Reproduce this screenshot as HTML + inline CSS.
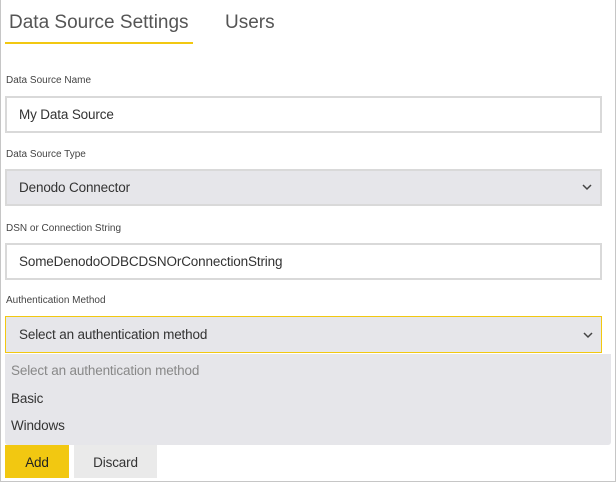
<!DOCTYPE html>
<html><head><meta charset="utf-8"><style>
*{box-sizing:border-box;margin:0;padding:0}
body{width:616px;height:483px;background:#fff;font-family:"Liberation Sans",sans-serif;color:#333;position:relative;overflow:hidden}
.frame{position:absolute;left:0;top:0;width:616px;height:482px;border:1px solid #c6c6c6;border-top:none}
.abs{position:absolute}
.tab{font-size:19px;color:#555;top:12px}
.lbl{font-size:10px;color:#444;left:6px}
.box{left:5px;width:597px;height:37px;border:2px solid #d9d9d9;font-size:13.5px;letter-spacing:-0.15px;color:#333;padding-left:12px;line-height:33px}
.sel{background:#e6e6ea}
.chev{position:absolute;right:8px;top:12px}
.dd{font-size:13.5px;letter-spacing:-0.15px}
</style></head><body>
<div class="frame"></div>
<div class="abs tab" style="left:9px">Data Source Settings</div>
<div class="abs tab" style="left:225px">Users</div>
<div class="abs" style="left:5px;top:42px;width:188px;height:2px;background:#f2c811"></div>

<div class="abs lbl" style="top:75px">Data Source Name</div>
<div class="abs box" style="top:96px">My Data Source</div>

<div class="abs lbl" style="top:149px">Data Source Type</div>
<div class="abs box sel" style="top:169px">Denodo Connector<svg class="chev" width="10" height="8" viewBox="0 0 10 8"><path d="M1 2 L5 6 L9 2" fill="none" stroke="#444" stroke-width="1.5"/></svg></div>

<div class="abs lbl" style="top:223px">DSN or Connection String</div>
<div class="abs box" style="top:243px">SomeDenodoODBCDSNOrConnectionString</div>

<div class="abs lbl" style="top:295px">Authentication Method</div>
<div class="abs box sel" style="top:316px;border:1px solid #f2c811;padding-left:13px;line-height:35px">Select an authentication method<svg class="chev" width="10" height="8" viewBox="0 0 10 8" style="top:14px"><path d="M1 2 L5 6 L9 2" fill="none" stroke="#444" stroke-width="1.5"/></svg></div>

<div class="abs dd" style="left:5px;top:354px;width:606px;height:91px;background:#e6e6ea;border-radius:0 0 3px 3px">
<div class="abs" style="left:6px;top:9px;color:#888">Select an authentication method</div>
<div class="abs" style="left:6px;top:37px;color:#333">Basic</div>
<div class="abs" style="left:6px;top:64px;color:#333">Windows</div>
</div>

<div class="abs dd" style="left:5px;top:445px;width:64px;height:33px;background:#f2c811;color:#222;text-align:center;line-height:36px">Add</div>
<div class="abs dd" style="left:74px;top:445px;width:83px;height:33px;background:#eaeaea;color:#333;text-align:center;line-height:36px">Discard</div>
</body></html>
